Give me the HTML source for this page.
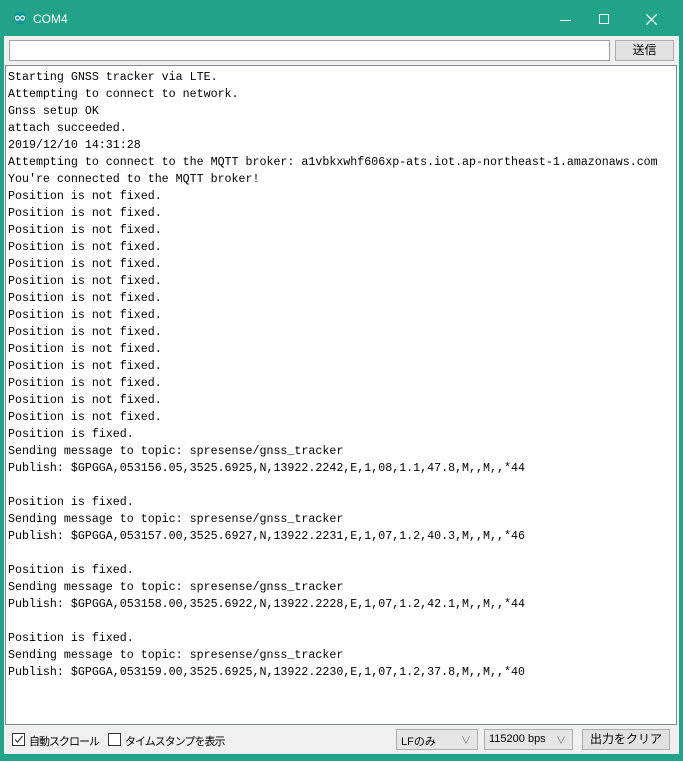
<!DOCTYPE html>
<html><head><meta charset="utf-8"><style>
*{margin:0;padding:0;box-sizing:border-box}
body{width:683px;height:761px;background:#22a288;position:relative;overflow:hidden;font-family:"Liberation Sans","Noto Sans CJK JP",sans-serif}
.title{position:absolute;left:0;top:0;width:683px;height:36px;color:#fff;font-size:12px}
.panel{position:absolute;left:4px;top:36px;width:675px;height:718px;background:#f0f0f0}
.inp{position:absolute;left:5px;top:4px;width:601px;height:21px;background:#fff;border:1px solid #a0a0a0}
.btn{position:absolute;background:#e1e1e1;border:1px solid #adadad;font-size:12px;color:#000;text-align:center}
.out{position:absolute;left:1px;top:29px;width:672px;height:660px;background:#fff;border:1px solid #828790;}
pre{font-family:"Liberation Mono",monospace;font-size:11.65px;line-height:17px;color:#000;position:absolute;left:2px;top:3px}
.sel{position:absolute;top:693px;height:21px;background:#e5e5e5;border:1px solid #acacac;font-size:11px;padding:3px 0 0 4px}
.sel span{position:absolute;right:6px;top:2px;color:#777;font-size:10px}
.cb{position:absolute;top:697px;width:13px;height:13px;border:1px solid #333;background:#fff}
.lbl{position:absolute;top:697px;font-size:11px;letter-spacing:-1px;white-space:nowrap}
</style></head><body>
<div class="title">
<svg style="position:absolute;left:12px;top:12px" width="16" height="12" viewBox="0 0 16 12"><circle cx="8" cy="6" r="6" fill="#00979d"/><circle cx="5.5" cy="6" r="2" fill="none" stroke="#fff" stroke-width="1.2"/><circle cx="10.5" cy="6" r="2" fill="none" stroke="#fff" stroke-width="1.2"/></svg>
<div style="position:absolute;left:33px;top:12px">COM4</div>
<div style="position:absolute;left:560px;top:20px;width:11px;height:1px;background:#fff"></div>
<div style="position:absolute;left:599px;top:14px;width:10px;height:10px;border:1px solid #fff"></div>
<svg style="position:absolute;left:646px;top:14px" width="11" height="11"><path d="M0 0L11 11M11 0L0 11" stroke="#fff" stroke-width="1.2"/></svg>
</div>
<div class="panel">
<div class="inp"></div>
<div class="btn" style="left:611px;top:4px;width:59px;height:21px;line-height:19px">送信</div>
<div class="out"><pre>Starting GNSS tracker via LTE.
Attempting to connect to network.
Gnss setup OK
attach succeeded.
2019/12/10 14:31:28
Attempting to connect to the MQTT broker: a1vbkxwhf606xp-ats.iot.ap-northeast-1.amazonaws.com
You're connected to the MQTT broker!
Position is not fixed.
Position is not fixed.
Position is not fixed.
Position is not fixed.
Position is not fixed.
Position is not fixed.
Position is not fixed.
Position is not fixed.
Position is not fixed.
Position is not fixed.
Position is not fixed.
Position is not fixed.
Position is not fixed.
Position is not fixed.
Position is fixed.
Sending message to topic: spresense/gnss_tracker
Publish: $GPGGA,053156.05,3525.6925,N,13922.2242,E,1,08,1.1,47.8,M,,M,,*44

Position is fixed.
Sending message to topic: spresense/gnss_tracker
Publish: $GPGGA,053157.00,3525.6927,N,13922.2231,E,1,07,1.2,40.3,M,,M,,*46

Position is fixed.
Sending message to topic: spresense/gnss_tracker
Publish: $GPGGA,053158.00,3525.6922,N,13922.2228,E,1,07,1.2,42.1,M,,M,,*44

Position is fixed.
Sending message to topic: spresense/gnss_tracker
Publish: $GPGGA,053159.00,3525.6925,N,13922.2230,E,1,07,1.2,37.8,M,,M,,*40</pre></div>
<div class="cb" style="left:8px"><svg width="11" height="11" style="position:absolute;left:0;top:0"><path d="M2 5.5L4.5 8L9.5 2" stroke="#333" fill="none" stroke-width="1.2"/></svg></div>
<div class="lbl" style="left:25px">自動スクロール</div>
<div class="cb" style="left:104px"></div>
<div class="lbl" style="left:121px">タイムスタンプを表示</div>
<div class="sel" style="left:392px;width:82px">LFのみ<span>∨</span></div>
<div class="sel" style="left:480px;width:89px">115200 bps<span>∨</span></div>
<div class="btn" style="left:578px;top:693px;width:88px;height:21px;line-height:19px">出力をクリア</div>
</div>
</body></html>
